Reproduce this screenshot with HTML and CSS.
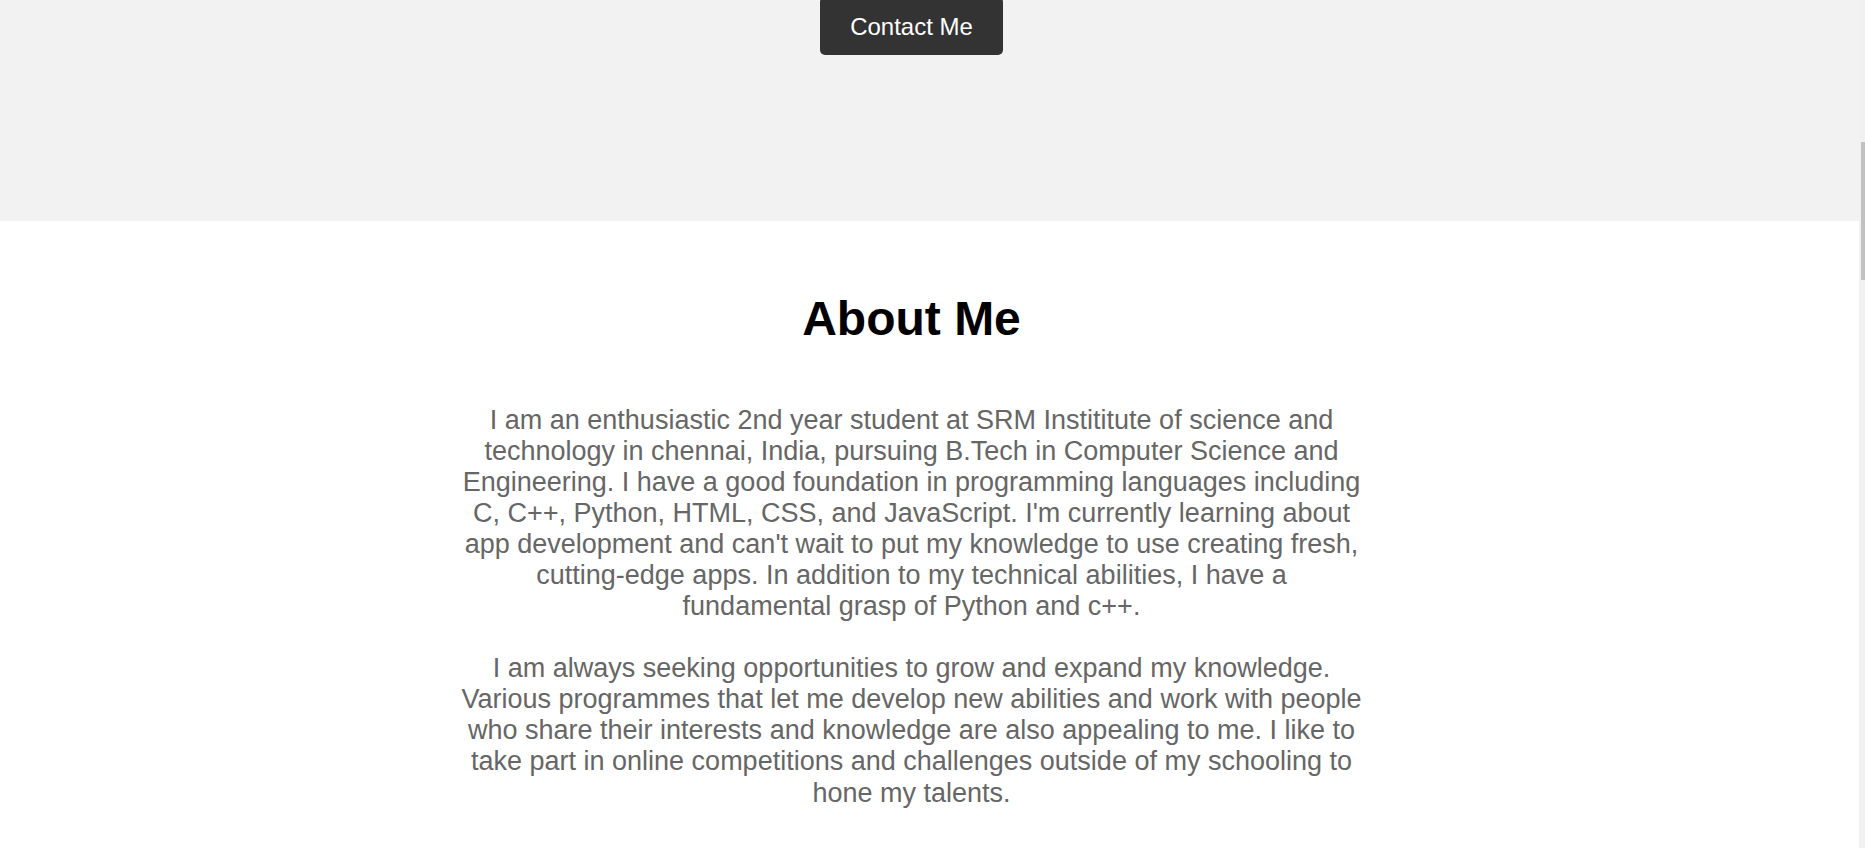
FILE: index.html
```html
<!DOCTYPE html>
<html lang="en">
<head>
<meta charset="utf-8">
<title>About Me</title>
<link rel="stylesheet" href="styles.css">
</head>
<body>
<div class="page">
  <main class="main">
    <section class="hero">
      <a class="btn" href="#contact">Contact Me</a>
    </section>
    <section class="about">
      <h2 class="about-title">About Me</h2>
      <div class="about-text">
        <p>I am an enthusiastic 2nd year student at SRM Instititute of science and technology in chennai, India, pursuing B.Tech in Computer Science and Engineering. I have a good foundation in programming languages including C, C++, Python, HTML, CSS, and JavaScript. I'm currently learning about app development and can't wait to put my knowledge to use creating fresh, cutting-edge apps. In addition to my technical abilities, I have a fundamental grasp of Python and c++.</p>
        <p>I am always seeking opportunities to grow and expand my knowledge. Various programmes that let me develop new abilities and work with people who share their interests and knowledge are also appealing to me. I like to take part in online competitions and challenges outside of my schooling to hone my talents.</p>
      </div>
    </section>
  </main>
  <div class="scrollbar"><div class="thumb"></div></div>
</div>
</body>
</html>
```

FILE: styles.css
```css
html, body {
  margin: 0;
  padding: 0;
  height: 100%;
  overflow: hidden;
  background: #ffffff;
  font-family: "Liberation Sans", Arial, sans-serif;
}

.page {
  display: flex;
  height: 848px;
}

.main {
  flex: 1;
  min-width: 0;
}

.hero {
  background: #f2f2f2;
  height: 221px;
  display: flex;
  justify-content: center;
  align-items: flex-start;
  padding-right: 36px;
  box-sizing: border-box;
}

.btn {
  display: inline-block;
  margin-top: -3px;
  padding: 16px 30px 14px;
  background: #333333;
  color: #ffffff;
  font-size: 24px;
  text-decoration: none;
  border-radius: 5px;
}

.about {
  padding: 30px 36px 0 0;
  display: flex;
  flex-direction: column;
  align-items: center;
}

.about-title {
  margin: 40px 0 0 0;
  font-size: 48px;
  font-weight: bold;
  color: #000000;
  line-height: normal;
}

.about-text {
  width: 905px;
  margin-top: 59px;
  text-align: center;
  color: #666666;
  font-size: 27px;
  line-height: 1.15;
}

.about-text p {
  margin: 0 0 31px 0;
}

.scrollbar {
  width: 6px;
  background: #f1f1f1;
  display: flex;
  justify-content: flex-end;
  align-items: flex-start;
}

.thumb {
  width: 4px;
  height: 138px;
  margin-top: 142px;
  background: #c1c1c1;
}
```
